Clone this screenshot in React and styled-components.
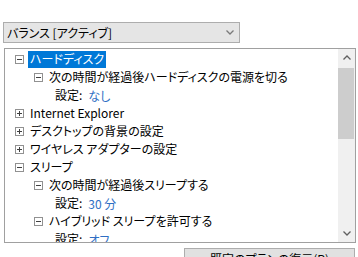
import React from "react";
import styled, { createGlobalStyle } from "styled-components";

const GlobalStyle = createGlobalStyle`
  html, body {
    margin: 0;
    padding: 0;
    overflow: hidden;
    background: #ffffff;
  }
  body {
    font-family: "Noto Sans CJK JP", "Noto Sans", sans-serif;
    font-size: 12px;
    color: #000;
    font-feature-settings: "palt";
  }
`;

const Page = styled.div`
  display: flex;
  flex-direction: column;
  padding: 22px 2px 0 3px;
`;

const Select = styled.div`
  box-sizing: border-box;
  width: 237px;
  height: 21px;
  border: 1px solid #adadad;
  background: #e5e5e5;
  display: flex;
  align-items: center;
  justify-content: space-between;
  padding: 0 5px 0 3px;
  line-height: 1;
`;

const TreeBox = styled.div`
  box-sizing: border-box;
  margin: 5px 0 0 1px;
  width: 352px;
  height: 195px;
  border: 1px solid #a0a0a0;
  display: flex;
`;

const TreeList = styled.div`
  flex: 1;
  padding-top: 1px;
  overflow: hidden;
`;

const Row = styled.div`
  height: 18px;
  display: flex;
  align-items: center;
  padding-left: ${({ $level }) => 10 + $level * 19}px;
  white-space: nowrap;
`;

const Expander = styled.span`
  box-sizing: border-box;
  width: 9px;
  height: 9px;
  border: 1px solid #919191;
  background: #fff;
  position: relative;
  margin-right: 4px;
  flex: none;

  &::before {
    content: "";
    position: absolute;
    left: 1px;
    top: 3px;
    width: 5px;
    height: 1px;
    background: #404040;
  }

  &::after {
    content: "";
    display: ${({ $open }) => ($open ? "none" : "block")};
    position: absolute;
    left: 3px;
    top: 1px;
    width: 1px;
    height: 5px;
    background: #404040;
  }
`;

const Label = styled.span`
  padding: 1px 2px 2px;
  line-height: 14px;
  background: ${({ $selected }) => ($selected ? "#0078d7" : "transparent")};
  color: ${({ $selected }) => ($selected ? "#fff" : "#000")};
`;

const Value = styled.span`
  color: #2f6fc4;
  margin-left: 4px;
`;

const ScrollBar = styled.div`
  width: 17px;
  background: #f0f0f0;
  display: flex;
  flex-direction: column;
  flex: none;
`;

const ArrowButton = styled.div`
  height: 17px;
  display: flex;
  align-items: center;
  justify-content: center;
  flex: none;
`;

const Thumb = styled.div`
  margin: 2px 1px 0 0;
  height: 71px;
  background: #cdcdcd;
`;

const Spacer = styled.div`
  flex: 1;
`;

const Button = styled.div`
  box-sizing: border-box;
  margin: 5px 0 0 181px;
  width: 171px;
  height: 23px;
  border: 1px solid #adadad;
  background: #e1e1e1;
  display: flex;
  align-items: flex-start;
  justify-content: center;
  padding-top: 2px;
  line-height: 16px;
`;

const Chevron = ({ up, color = "#606060", w = 8 }) => (
  <svg width={w} height="5" viewBox="0 0 8 5">
    <polyline
      points={up ? "0.5,4.5 4,1 7.5,4.5" : "0.5,0.5 4,4 7.5,0.5"}
      fill="none"
      stroke={color}
      strokeWidth="1.3"
    />
  </svg>
);

const rows = [
  { level: 0, open: true, label: "ハードディスク", selected: true },
  { level: 1, open: true, label: "次の時間が経過後ハードディスクの電源を切る" },
  { level: 2, label: "設定:", value: "なし" },
  { level: 0, open: false, label: "Internet Explorer" },
  { level: 0, open: false, label: "デスクトップの背景の設定" },
  { level: 0, open: false, label: "ワイヤレス アダプターの設定" },
  { level: 0, open: true, label: "スリープ" },
  { level: 1, open: true, label: "次の時間が経過後スリープする" },
  { level: 2, label: "設定:", value: "30 分" },
  { level: 1, open: true, label: "ハイブリッド スリープを許可する" },
  { level: 2, label: "設定:", value: "オフ" },
];

export default function App() {
  return (
    <>
      <GlobalStyle />
      <Page>
        <Select>
          <span>バランス [アクティブ]</span>
          <Chevron color="#7a7a7a" />
        </Select>
        <TreeBox>
          <TreeList>
            {rows.map((r, i) => (
              <Row key={i} $level={r.level}>
                {r.level < 2 && <Expander $open={r.open} />}
                <Label $selected={r.selected}>{r.label}</Label>
                {r.value && <Value>{r.value}</Value>}
              </Row>
            ))}
          </TreeList>
          <ScrollBar>
            <ArrowButton>
              <Chevron up />
            </ArrowButton>
            <Thumb />
            <Spacer />
            <ArrowButton>
              <Chevron />
            </ArrowButton>
          </ScrollBar>
        </TreeBox>
        <Button>既定のプランの復元(R)</Button>
      </Page>
    </>
  );
}
